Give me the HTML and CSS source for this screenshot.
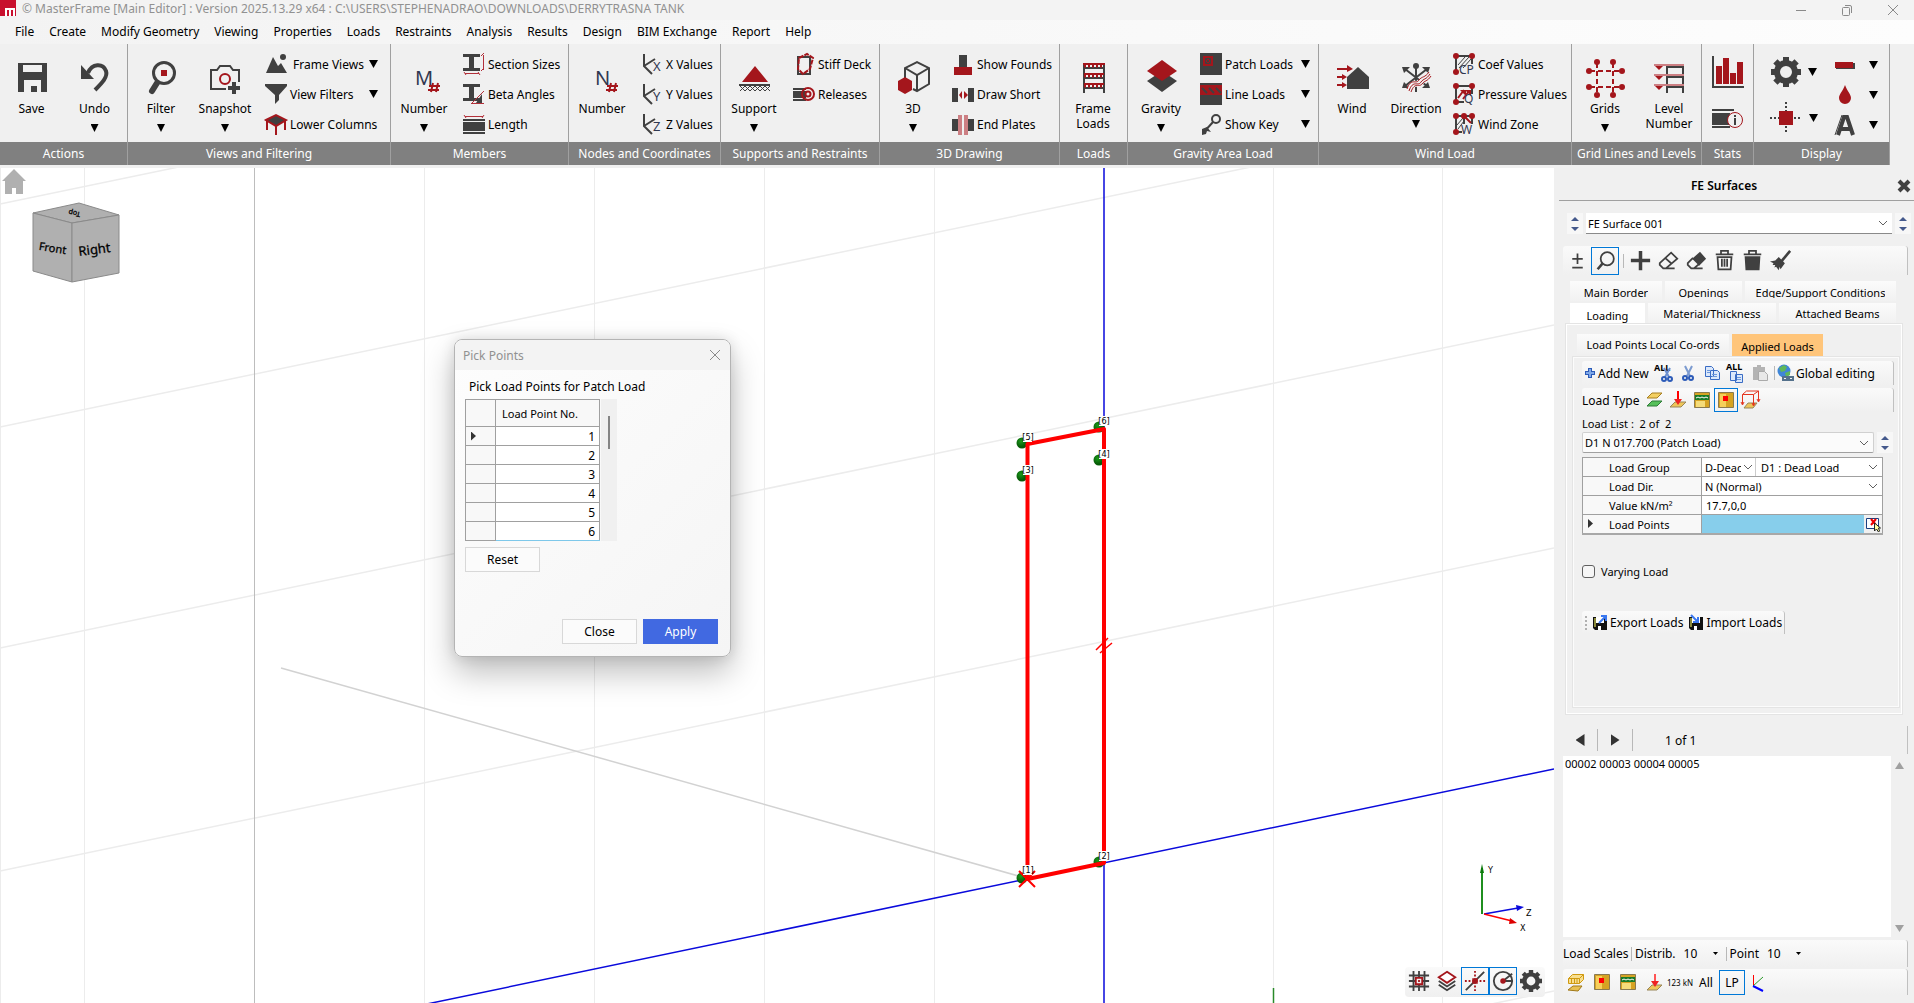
FILE: index.html
```html
<!DOCTYPE html>
<html lang="en">
<head>
<meta charset="utf-8">
<title>MasterFrame [Main Editor]</title>
<link rel="stylesheet" href="styles.css">
</head>
<body>
<header class="titlebar">
  <svg class="logo" width="16" height="16" viewBox="0 0 16 16"><path fill="#c8102e" d="M0 0h16v16H0z"/><path fill="none" stroke="#fff" stroke-width="2" d="M6 16V9h8v7M10 9v7"/></svg>
  <h1>© MasterFrame [Main Editor] : Version 2025.13.29 x64 : C:\USERS\STEPHENADRAO\DOWNLOADS\DERRYTRASNA TANK</h1>
  <div class="window-buttons">
    <button aria-label="Minimize"><svg width="12" height="12" viewBox="0 0 12 12"><path d="M1 6.500h10"/></svg></button>
    <button aria-label="Restore"><svg width="12" height="12" viewBox="0 0 12 12"><rect x="1.500" y="3.500" width="7" height="8" rx="1"/><path d="M4 1.500h5q1.500 0 1.500 1.500v6"/></svg></button>
    <button aria-label="Close window"><svg width="12" height="12" viewBox="0 0 12 12"><path d="M1 1l10 10M11 1L1 11"/></svg></button>
  </div>
</header>
<nav class="menubar">
  <a href="#">File</a><a href="#">Create</a><a href="#">Modify Geometry</a><a href="#">Viewing</a><a href="#">Properties</a><a href="#">Loads</a><a href="#">Restraints</a><a href="#">Analysis</a><a href="#">Results</a><a href="#">Design</a><a href="#">BIM Exchange</a><a href="#">Report</a><a href="#">Help</a>
</nav>

<div class="ribbon">
  <section class="group g-actions">
    <div class="group-body">
      <button class="big"><svg viewBox="0 0 32 36"><path fill="#404040" fill-rule="evenodd" d="M2 3h29v29H2zM7 5v7h19V5zM8 32V20h17v12h-4v-6h-6v6z"/></svg><span>Save</span></button>
      <button class="big"><svg viewBox="0 0 32 36"><path fill="#404040" d="M2 5v14h13z"/><path fill="none" stroke="#404040" stroke-width="4" d="M9 13C13 3 24 3 27 11c2 6-4 12-11 19"/></svg><span>Undo</span><i class="arrow"></i></button>
    </div>
    <h2>Actions</h2>
  </section>
  <section class="group g-views">
    <div class="group-body">
      <button class="big"><svg viewBox="0 0 32 36"><circle cx="19" cy="13" r="10.500" fill="none" stroke="#404040" stroke-width="3"/><path stroke="#404040" stroke-width="6" stroke-linecap="round" d="M12 23l-5 8"/><path fill="#a4161c" d="M16 10h6v6h-6z"/></svg><span>Filter</span><i class="arrow"></i></button>
      <button class="big mid"><svg viewBox="0 0 32 36"><path fill="none" stroke="#404040" stroke-width="2" d="M17 29H2V10h6l3-4h10l3 4h6v12"/><circle cx="16" cy="19" r="5" fill="none" stroke="#a4161c" stroke-width="2"/><path stroke="#404040" stroke-width="4" d="M19 28h12M25 22v12"/></svg><span>Snapshot</span><i class="arrow"></i></button>
      <div class="small-col after-two">
        <button class="small"><svg viewBox="0 0 22 22"><path fill="#404040" d="M1 20L8 4l5 9 3-3 6 10z"/><circle cx="18" cy="4" r="3" fill="#404040"/></svg><span>&nbsp;Frame Views</span><i class="arrow"></i></button>
        <button class="small"><svg viewBox="0 0 22 22"><path fill="#404040" d="M0 1h22v2l-8 9v5l-4 4v-9L0 3z"/></svg><span>View Filters</span><i class="arrow"></i></button>
        <button class="small"><svg viewBox="0 0 22 22"><path fill="none" stroke="#a4161c" stroke-width="2" d="M2 6v11M20 6v11M11 12v10"/><path fill="#404040" stroke="#a4161c" stroke-width="2" d="M1 7l10-5 10 5-10 6z"/></svg><span>Lower Columns</span></button>
      </div>
    </div>
    <h2>Views and Filtering</h2>
  </section>
  <section class="group g-members">
    <div class="group-body">
      <button class="big"><svg viewBox="0 0 32 36"><text x="7" y="25" font-size="20" fill="#303850">M</text><path fill="none" stroke="#a4161c" stroke-width="2" d="M25 23l-2 9M30 23l-2 9M21 26h11M20 30h11"/></svg><span>Number</span><i class="arrow"></i></button>
      <div class="small-col">
        <button class="small"><svg viewBox="0 0 22 22"><path fill="#404040" d="M0 1h17v3h-6v11h6v3H0v-3h6V4H0z"/><path fill="none" stroke="#b2303a" d="M20.500 2v15M18 3l3-3M18 18l3-3M2 20.500h14M1 19l2 3M15 19l2 3"/></svg><span>Section Sizes</span></button>
        <button class="small"><svg viewBox="0 0 22 22"><path fill="#404040" d="M0 1h17v3h-6v11h6v3H0v-3h6V4H0zM13 20l6-9v9z"/><path fill="none" stroke="#b2303a" d="M8 21L21 8M9 20.500h12"/></svg><span>Beta Angles</span></button>
        <button class="small"><svg viewBox="0 0 22 22"><path fill="#404040" d="M0 6h22v2H0zM0 9h22v9H0zM0 19h22v2H0z"/><path stroke="#b2303a" d="M2 3.500h18M1 2l2 3M19 5l2-3"/></svg><span>Length</span></button>
      </div>
    </div>
    <h2>Members</h2>
  </section>
  <section class="group g-nodes">
    <div class="group-body">
      <button class="big"><svg viewBox="0 0 32 36"><text x="9" y="25" font-size="20" fill="#303850">N</text><path fill="none" stroke="#a4161c" stroke-width="2" d="M25 23l-2 9M30 23l-2 9M21 26h11M20 30h11"/></svg><span>Number</span></button>
      <div class="small-col">
        <button class="small"><svg viewBox="0 0 22 22"><path fill="none" stroke="#404040" stroke-width="2" d="M3 1v12l8 8M3 13l11-7"/><text x="12" y="18" font-size="13" fill="#303850">X</text></svg><span>X Values</span></button>
        <button class="small"><svg viewBox="0 0 22 22"><path fill="none" stroke="#404040" stroke-width="2" d="M3 1v12l8 8M3 13l11-7"/><text x="12" y="18" font-size="13" fill="#303850">Y</text></svg><span>Y Values</span></button>
        <button class="small"><svg viewBox="0 0 22 22"><path fill="none" stroke="#404040" stroke-width="2" d="M3 1v12l8 8M3 13l11-7"/><text x="12" y="18" font-size="13" fill="#303850">Z</text></svg><span>Z Values</span></button>
      </div>
    </div>
    <h2>Nodes and Coordinates</h2>
  </section>
  <section class="group g-supports">
    <div class="group-body">
      <button class="big"><svg viewBox="0 0 32 36"><path fill="#a4161c" d="M17 6l13 16H4z"/><path fill="none" stroke="#404040" stroke-width="2" d="M1 25h31"/><path fill="none" stroke="#404040" d="M2 31l5-5 5 5 5-5 5 5 5-5 5 5M2 26l5 5 5-5 5 5 5-5 5 5 5-5"/></svg><span>Support</span><i class="arrow"></i></button>
      <div class="small-col">
        <button class="small"><svg viewBox="0 0 22 22"><path fill="none" stroke="#404040" stroke-width="2" d="M5 4h12v17H5z"/><path fill="none" stroke="#a4161c" stroke-width="2" stroke-dasharray="5 1" d="M6 5l8-4 6 4-3 11-7 5-5-5z"/></svg><span>Stiff Deck</span></button>
        <button class="small"><svg viewBox="0 0 22 22"><path fill="#404040" d="M0 5h13v2H0zM0 8h13v7H0zM0 16h13v2H0z"/><circle cx="15" cy="11" r="6" fill="none" stroke="#a4161c" stroke-width="2"/><circle cx="15" cy="11" r="2.500" fill="none" stroke="#a4161c" stroke-width="2"/></svg><span>Releases</span></button>
      </div>
    </div>
    <h2>Supports and Restraints</h2>
  </section>
  <section class="group g-3d">
    <div class="group-body">
      <button class="big"><svg viewBox="0 0 32 36"><path fill="none" stroke="#404040" stroke-width="2" d="M8 19V8l12-6 12 6v16l-12 7-4-2M8 8l12 7 12-7M20 15v16"/><path fill="#a4161c" d="M8 17l7 4v9l-7 4-7-4v-9z"/></svg><span>3D</span><i class="arrow"></i></button>
      <div class="small-col">
        <button class="small"><svg viewBox="0 0 22 22"><path fill="#404040" d="M7 2h8v12H7z"/><path fill="#a4161c" d="M2 14h18v8H2z"/></svg><span>Show Founds</span></button>
        <button class="small"><svg viewBox="0 0 22 22"><path fill="#404040" d="M0 5h6v14H0zM16 5h6v14h-6z"/><path fill="#a4161c" d="M10 8v8l-3-4zM12 8v8l4-4z"/></svg><span>Draw Short</span></button>
        <button class="small"><svg viewBox="0 0 22 22"><path fill="#404040" d="M0 6h7v12H0zM15 6h7v12h-7z"/><path fill="#cc7f83" d="M6 2h4v20H6zM12 2h4v20h-4z"/></svg><span>End Plates</span></button>
      </div>
    </div>
    <h2>3D Drawing</h2>
  </section>
  <section class="group g-loads">
    <div class="group-body">
      <button class="big"><svg viewBox="0 0 32 36"><path fill="none" stroke="#404040" stroke-width="2" d="M7 3v30M27 3v30M7 8h20M7 18h20M7 28h20"/><path stroke="#a4161c" stroke-width="2" d="M6 4h22M7 14h20M7 24h20"/><path stroke="#a4161c" stroke-width="3" stroke-dasharray="2 2" d="M7 6h20M7 16h20M7 26h20"/></svg><span>Frame<br>Loads</span></button>
    </div>
    <h2>Loads</h2>
  </section>
  <section class="group g-gravity">
    <div class="group-body">
      <button class="big"><svg viewBox="0 0 32 36"><path fill="#404040" d="M17 11l15 10-15 11L2 21z"/><path fill="#a4161c" d="M17 0l15 11-15 10L2 11z"/></svg><span>Gravity</span><i class="arrow"></i></button>
      <div class="small-col">
        <button class="small"><svg viewBox="0 0 22 22"><path fill="#404040" d="M0 0h22v22H0z"/><path fill="#a4161c" d="M3 3h10v10H3z"/><path fill="none" stroke="#404040" d="M5.500 5.500h5v5h-5zM6 6l4 4M10 6l-4 4"/></svg><span>Patch Loads</span><i class="arrow"></i></button>
        <button class="small"><svg viewBox="0 0 22 22"><path fill="#404040" d="M0 0h22v22H0z"/><path fill="#a4161c" d="M0 2h22v10H0z"/><path stroke="#404040" stroke-width="2" d="M2 5l5 5M9 5l5 5M16 5l5 5"/></svg><span>Line Loads</span><i class="arrow"></i></button>
        <button class="small"><svg viewBox="0 0 22 22"><circle cx="16" cy="6" r="4" fill="none" stroke="#404040" stroke-width="2"/><path fill="none" stroke="#404040" stroke-width="2" d="M13 9L3 20"/><path fill="#404040" d="M2 16l5-2 4 5-4-1-1 3-4 1z"/></svg><span>Show Key</span><i class="arrow"></i></button>
      </div>
    </div>
    <h2>Gravity Area Load</h2>
  </section>
  <section class="group g-wind">
    <div class="group-body">
      <button class="big"><svg viewBox="0 0 32 36"><path fill="#404040" d="M11 17l11-10 11 10v12H11z"/><path stroke="#a4161c" stroke-width="2" d="M1 9h12M1 17h7M1 25h7"/><path fill="#a4161c" d="M11 5l6 4-6 3zM6 14l5 3-5 3zM6 22l5 3-5 3z"/></svg><span>Wind</span></button>
      <button class="big mid high"><svg viewBox="0 0 32 36"><path fill="none" stroke="#404040" stroke-width="2" d="M16 4v28M5 9l22 17M27 9L5 26"/><circle cx="16" cy="6" r="3" fill="#404040"/><path fill="#404040" d="M2 7h8l-6 6zM30 7h-8l6 6zM2 28h8l-6-6zM30 28h-8l6-6z"/><path fill="none" stroke="#f0f0f0" stroke-width="6" d="M9 31c4-12 9-4 12-9 3-4 5-2 9-8"/><path fill="none" stroke="#a4161c" d="M7 29c4-12 9-4 12-9 3-4 6-2 10-8M9 31c4-12 9-4 12-9 3-4 5-2 9-8M11 32c4-11 8-4 11-8 3-4 5-2 9-8"/></svg><span>Direction</span><i class="arrow"></i></button>
      <div class="small-col">
        <button class="small"><svg viewBox="0 0 22 22"><path fill="none" stroke="#404040" stroke-width="2" d="M3 3h16M3 3v16M19 3v8"/><path stroke="#404040" d="M5 12l7-8M6 15L16 4M10 15l8-9"/><g fill="#a4161c"><circle cx="3" cy="3" r="3"/><circle cx="19" cy="3" r="3"/><circle cx="3" cy="19" r="3"/></g><text x="6" y="21" font-size="12" fill="#303850">CP</text></svg><span>Coef Values</span></button>
        <button class="small"><svg viewBox="0 0 22 22"><path fill="none" stroke="#404040" stroke-width="2" d="M3 3h16M3 3v16M19 3v8M3 19h8"/><path stroke="#a4161c" stroke-width="2" d="M5 15l6-8M10 16l6-8"/><path fill="#a4161c" d="M7 7h6v6zM12 7h6v6z"/><g fill="#a4161c"><circle cx="3" cy="3" r="3"/><circle cx="19" cy="3" r="3"/><circle cx="3" cy="19" r="3"/></g><text x="11" y="20" font-size="12" fill="#303850">Q</text></svg><span>Pressure Values</span></button>
        <button class="small"><svg viewBox="0 0 22 22"><path fill="none" stroke="#404040" stroke-width="2" d="M3 3h16M3 3v16M19 3v8M3 19h6M11 3v8"/><path stroke="#404040" d="M4 12l6-7M5 16l6-8"/><path stroke="#a4161c" stroke-width="2" d="M12 4l6 6"/><g fill="#a4161c"><circle cx="3" cy="3" r="3"/><circle cx="11" cy="3" r="3"/><circle cx="19" cy="3" r="3"/><circle cx="3" cy="19" r="3"/></g><text x="8" y="21" font-size="12" fill="#303850">W</text></svg><span>Wind Zone</span></button>
      </div>
    </div>
    <h2>Wind Load</h2>
  </section>
  <section class="group g-grids">
    <div class="group-body">
      <button class="big wide-icon"><svg viewBox="0 0 40 40"><path fill="none" stroke="#a4161c" stroke-width="2" stroke-dasharray="5 3" d="M12 5v30M28 5v30M5 13h30M5 29h30"/><g fill="#a4161c"><circle cx="12" cy="4" r="3"/><circle cx="28" cy="4" r="3"/><circle cx="12" cy="37" r="3"/><circle cx="28" cy="37" r="3"/><circle cx="4" cy="13" r="3"/><circle cx="37" cy="13" r="3"/><circle cx="4" cy="29" r="3"/><circle cx="37" cy="29" r="3"/></g></svg><span>Grids</span><i class="arrow"></i></button>
      <button class="big mid"><svg viewBox="0 0 32 36"><path fill="none" stroke="#404040" stroke-width="2" d="M14 33V7h16v26M14 17h16M14 27h16"/><path stroke="#cc7f83" stroke-width="2" d="M1 5h30M1 15h30M1 25h30"/><path fill="#a4161c" d="M2 6h8l-4 4zM2 16h8l-4 4zM2 26h8l-4 4z"/></svg><span>Level<br>Number</span></button>
    </div>
    <h2>Grid Lines and Levels</h2>
  </section>
  <section class="group g-stats">
    <div class="group-body stack">
      <button class="icon-btn" aria-label="Charts"><svg width="32" height="32" viewBox="0 0 32 32"><path fill="none" stroke="#404040" stroke-width="2" d="M1 0v31h31"/><path fill="#a4161c" d="M4 10h6v18H4zM11 2h6v26h-6zM18 17h6v11h-6zM25 6h6v22h-6z"/></svg></button>
      <button class="icon-btn" aria-label="Member info"><svg width="32" height="20" viewBox="0 0 32 20"><path fill="#404040" d="M0 0h22v2H0zM0 4h18v12H0zM0 17h18v2H0z"/><circle cx="23" cy="11" r="7.500" fill="#f0f0f0" stroke="#a4161c"/><path stroke="#404040" stroke-width="2" d="M23 9v7M23 6v2"/></svg></button>
    </div>
    <h2>Stats</h2>
  </section>
  <section class="group g-display">
    <div class="group-body">
      <div class="display-col">
        <button class="icon-btn" aria-label="Settings"><svg width="30" height="30" viewBox="-15 -15 30 30"><g fill="#404040"><path fill-rule="evenodd" d="M0-12a12 12 0 100 24 12 12 0 100-24zM0-6a6 6 0 110 12 6 6 0 110-12z"/><path d="M-3-15h6v5h-6zM-3 10h6v5h-6zM-15-3h5v6h-5zM10-3h5v6h-5z"/><path transform="rotate(45)" d="M-3-15h6v5h-6zM-3 10h6v5h-6zM-15-3h5v6h-5zM10-3h5v6h-5z"/></g></svg><i class="arrow"></i></button>
        <button class="icon-btn" aria-label="Node display"><svg width="32" height="32" viewBox="0 0 32 32"><path stroke="#404040" stroke-width="2" stroke-dasharray="2 2" d="M16 0v32M0 16h32"/><path fill="#a4161c" d="M9 9h14v14H9z"/></svg><i class="arrow"></i></button>
      </div>
      <div class="display-col rows">
        <button class="icon-btn" aria-label="Member display"><svg width="22" height="22" viewBox="0 0 22 22"><path fill="#404040" d="M2 9h19v6H2z"/><path fill="#a4161c" d="M1 8h18v6H1z"/></svg><i class="arrow"></i></button>
        <button class="icon-btn" aria-label="Colour"><svg width="22" height="22" viewBox="0 0 22 22"><path fill="#a4161c" d="M11 1c2 6 6 9 6 13a6 6 0 01-12 0c0-4 4-7 6-13z"/></svg><i class="arrow"></i></button>
        <button class="icon-btn" aria-label="Font"><svg width="22" height="22" viewBox="0 0 22 22"><path fill="none" stroke="#404040" stroke-width="4" d="M4 21l6-18h3l6 18M7 15h9"/><path stroke="#404040" d="M1 21L8 1"/></svg><i class="arrow"></i></button>
      </div>
    </div>
    <h2>Display</h2>
  </section>
</div>

<main class="workspace">
  <div class="viewport">
    <svg class="scene" viewBox="0 168 1554 835" preserveAspectRatio="xMinYMin slice">
      <defs><radialGradient id="ball" cx="40%" cy="35%"><stop offset="0" stop-color="#1b9a1b"/><stop offset="1" stop-color="#075c07"/></radialGradient></defs>
      <g fill="none" stroke="#ececec"><path d="M.5 168v835M84.500 168v835M424.500 168v835M594.500 168v835M764.500 168v835M934.500 168v835M1273.500 168v835M1442.500 168v835"/>
      <path stroke-width="1.500" d="M0 204L1554-118M0 427l1554-323M0 648l1554-323M0 871l1554-323M0 1314l1554-323"/></g>
      <path stroke="#bdbdbd" d="M254.500 168v835"/>
      <path stroke="#d2d2d2" stroke-width="1.500" d="M281 668l741 209"/>
      <path stroke="#0a0adc" stroke-width="1.500" d="M0 1093L1554 769M1104 168v261M1104 862v141"/>
      <path stroke="#2a8a2a" stroke-width="1.500" d="M1273.500 988v15"/>
      <g fill="url(#ball)"><circle cx="1022" cy="443" r="5.500"/><circle cx="1022" cy="476" r="5.500"/><circle cx="1099" cy="427" r="5.500"/><circle cx="1099" cy="460" r="5.500"/><circle cx="1022" cy="878" r="5.500"/><circle cx="1099" cy="862" r="5.500"/></g>
      <path fill="none" stroke="red" stroke-width="4" stroke-linejoin="round" d="M1027.500 879V444l76.500-15v434z"/>
      <path fill="none" stroke="red" stroke-width="2" d="M1019 871l16 16M1035 871l-16 16"/><path fill="none" stroke="red" stroke-width="1.500" d="M1096 650l12-12M1100 653l12-10"/>
      <g fill="#fff"><path d="M1023 432h9v10h-9zM1023 465h9v10h-9zM1099 416h9v10h-9zM1099 449h9v10h-9zM1023 865h9v10h-9zM1099 851h9v10h-9z"/></g>
      <g class="tags" text-anchor="middle"><text x="1028" y="440">[5]</text><text x="1028" y="473">[3]</text><text x="1104" y="424">[6]</text><text x="1104" y="457">[4]</text><text x="1028" y="873">[1]</text><text x="1104" y="859">[2]</text></g>
      <g stroke="#8a8a8a" fill="#b0b0b0" stroke-linejoin="round"><path d="M33 213l46-10 40 12-47 8z"/><path d="M33 213l39 10v59l-39-11z"/><path d="M72 223l47-8v58l-47 9z"/></g>
      <g class="cube-text" text-anchor="middle"><text class="cube-front" transform="translate(52 252) rotate(9)">Front</text><text transform="translate(95 254) rotate(-7)">Right</text><text class="cube-top" transform="translate(75 211) rotate(192)">Top</text></g>
      <path fill="#b0b0b0" d="M14 169l12 12h-3v13H16v-6h-4v6H5v-13H2z"/>
      <g fill="none" stroke-width="1.500"><path stroke="#1f8f1f" stroke-width="2" d="M1482 914v-46"/><path stroke="#0a0adc" d="M1484 914l34-6"/><path stroke="red" d="M1484 914l28 7"/></g>
      <path fill="#0b7a0b" d="M1480 873l2-9 2 9z"/><path fill="#0a0adc" d="M1516 905l8 2-7 4z"/><path fill="#d00" d="M1510 918l7 5-8 1z"/>
      <g class="tags"><text x="1488" y="873">Y</text><text x="1526" y="916">Z</text><text x="1520" y="931">X</text></g>
    </svg>
    <div class="view-tools">
      <button aria-label="Grid snap"><svg viewBox="0 0 24 24"><path fill="none" stroke="#404040" stroke-width="2" d="M6 1v22M12 1v22M18 1v22M1 6h22M1 12h22M1 18h22"/><path fill="#f0f0f0" stroke="#a4161c" stroke-width="2" d="M8.500 8.500h7v7h-7z"/><path fill="#a4161c" d="M11 11h2v2h-2z"/></svg></button>
      <button aria-label="Layers"><svg viewBox="0 0 24 24"><path fill="none" stroke="#404040" stroke-width="2" d="M3 12l9 6 9-6M3 16l9 6 9-6"/><path fill="#fff" stroke="#a4161c" stroke-width="2" d="M12 2l9 6-9 6-9-6z"/></svg></button>
      <button class="on" aria-label="Axis snap"><svg viewBox="0 0 24 24"><path stroke="#404040" stroke-width="2" d="M2 22L22 2"/><path stroke="#a4161c" stroke-width="2" stroke-dasharray="2 2" d="M12 1v22M1 12h22"/><path fill="#a4161c" d="M9 9h6v6H9z"/></svg></button>
      <button class="on" aria-label="Polar snap"><svg viewBox="0 0 24 24"><circle cx="12" cy="12" r="10" fill="none" stroke="#404040" stroke-width="2"/><path stroke="#404040" stroke-width="2" d="M12 12l10-8M12 12h10"/><circle cx="12" cy="12" r="3" fill="#a4161c"/></svg></button>
      <button aria-label="View settings"><svg viewBox="-15 -15 30 30"><g fill="#404040"><path fill-rule="evenodd" d="M0-12a12 12 0 100 24 12 12 0 100-24zM0-6a6 6 0 110 12 6 6 0 110-12z"/><path d="M-3-15h6v5h-6zM-3 10h6v5h-6zM-15-3h5v6h-5zM10-3h5v6h-5z"/><path transform="rotate(45)" d="M-3-15h6v5h-6zM-3 10h6v5h-6zM-15-3h5v6h-5zM10-3h5v6h-5z"/></g></svg></button>
    </div>

    <section class="dialog" role="dialog" aria-labelledby="pick-title">
      <header><h2 id="pick-title">Pick Points</h2><button aria-label="Close dialog"><svg width="12" height="12" viewBox="0 0 12 12"><path stroke="#8a8a8a" d="M1 1l10 10M11 1L1 11"/></svg></button></header>
      <p>Pick Load Points for Patch Load</p>
      <div class="pick-grid">
        <table>
          <thead><tr><th></th><th>Load Point No.</th></tr></thead>
          <tbody>
            <tr><td><i class="current"></i></td><td>1</td></tr>
            <tr><td></td><td>2</td></tr>
            <tr><td></td><td>3</td></tr>
            <tr><td></td><td>4</td></tr>
            <tr><td></td><td>5</td></tr>
            <tr><td></td><td>6</td></tr>
          </tbody>
        </table>
        <div class="scrollbar"><i></i></div>
      </div>
      <button class="plain">Reset</button>
      <footer><button class="plain">Close</button><button class="primary">Apply</button></footer>
    </section>
  </div>

  <aside class="panel">
    <header class="panel-head"><h2>FE Surfaces</h2><button aria-label="Close panel"><svg width="14" height="14" viewBox="0 0 14 14"><path stroke="#404040" stroke-width="4" d="M2 2l10 10M12 2L2 12"/></svg></button></header>
    <div class="surface-row">
      <span class="spin"><i></i><i></i></span>
      <select class="surface" aria-label="Surface"><option>FE Surface 001</option></select>
      <span class="spin"><i></i><i></i></span>
    </div>
    <div class="bar edit-tools">
      <button aria-label="Plus minus"><svg viewBox="0 0 24 24"><path stroke="#404040" stroke-width="2" d="M6 10h12M12 4v12M6 20h12"/></svg></button>
      <button class="on" aria-label="Zoom to"><svg viewBox="0 0 24 24"><circle cx="14" cy="10" r="7.500" fill="none" stroke="#404040" stroke-width="2"/><path stroke="#404040" stroke-width="3" d="M9 15l-6 7"/></svg></button>
      <i class="sep"></i>
      <button aria-label="Add"><svg viewBox="0 0 24 24"><path stroke="#404040" stroke-width="4" d="M1 12h22M12 1v22"/></svg></button>
      <button aria-label="Erase outline"><svg viewBox="0 0 24 24"><path fill="none" stroke="#404040" stroke-width="2" d="M2 15L15 3l7 7-13 11H6l-4-4zM8 9l8 7M9 21h10"/></svg></button>
      <button aria-label="Erase"><svg viewBox="0 0 24 24"><path fill="#404040" d="M7 10l9-8 7 8-8 8z"/><path fill="none" stroke="#404040" stroke-width="2" d="M8 9l-6 6v2l4 4h3l6-5M9 21h10"/></svg></button>
      <button aria-label="Delete"><svg viewBox="0 0 24 24"><path fill="none" stroke="#404040" stroke-width="2" d="M2 5h20M8 5V1h8v4M4 8l1 14h14l1-14zM9 10v9M12 10v9M15 10v9"/></svg></button>
      <button aria-label="Delete all"><svg viewBox="0 0 24 24"><path fill="none" stroke="#404040" stroke-width="2" d="M2 5h20M8 5V1h8v4"/><path fill="#404040" d="M3 7h18l-1 16H4z"/></svg></button>
      <button aria-label="Clean"><svg viewBox="0 0 24 24"><path stroke="#404040" stroke-width="3" d="M23 1L13 13"/><path fill="#404040" d="M0 13l6-1 4-4 7 7-5 7-1-3-1 4-3-4-2 1 1-3-3 0 1-2z"/></svg></button>
    </div>

    <div class="tabs tabs-one">
      <button><span>Main Border</span></button><button><span>Openings</span></button><button><span>Edge/Support Conditions</span></button>
    </div>
    <div class="tabs tabs-two">
      <button class="active">Loading</button><button>Material/Thickness</button><button>Attached Beams</button>
    </div>
    <div class="page">
      <div class="subtabs"><button>Load Points Local Co-ords</button><button class="active">Applied Loads</button></div>
      <div class="subpage">
        <div class="bar load-tools">
          <button class="add"><svg width="10" height="10" viewBox="0 0 10 10"><path stroke="#2c5bb8" stroke-width="4" d="M0 5h10M5 0v10"/><path stroke="#7fa8e8" stroke-width="2" d="M1 5h8M5 1v8"/></svg>Add New</button>
          <button aria-label="Cut all"><svg viewBox="0 0 20 20"><text x="0" y="8" font-size="9" font-weight="700">ALL</text><path stroke="#6b8fd0" stroke-width="2" d="M10 5l5 9M16 5l-5 9"/><g fill="none" stroke="#2c5bb8" stroke-width="2"><circle cx="10" cy="16" r="2"/><circle cx="16" cy="16" r="2"/></g></svg></button>
          <button aria-label="Cut"><svg viewBox="0 0 20 20"><path stroke="#7c9bd0" stroke-width="2" d="M7 3l5 10M14 3L9 13"/><g fill="none" stroke="#2c5bb8" stroke-width="2"><circle cx="7" cy="15" r="2"/><circle cx="13" cy="15" r="2"/></g></svg></button>
          <button aria-label="Copy"><svg viewBox="0 0 20 20"><path fill="#dbe8fb" stroke="#3a6cc4" d="M3.500 3.500h6l2 2v8h-8zM8.500 7.500h7l2 2v7h-9z"/><path stroke="#6c98dc" d="M5 7.500h4M5 9.500h3M10 11.500h5M10 13.500h5"/></svg></button>
          <button aria-label="Copy all"><svg viewBox="0 0 20 20"><text x="0" y="7" font-size="9" font-weight="700">ALL</text><path fill="#dbe8fb" stroke="#3a6cc4" d="M4.500 8.500h6v9h-6zM9.500 11.500h7v8h-7z"/><path stroke="#6c98dc" d="M11 14.500h4M11 16.500h4"/></svg></button>
          <button aria-label="Paste"><svg viewBox="0 0 20 20"><path fill="#b4b4b4" d="M3 4h4V2h4v2h4v13H3z"/><path fill="#e8e8e8" stroke="#aaa" d="M8.500 8.500h6l3 3v6h-9z"/></svg></button>
          <i class="sep"></i>
          <button class="global"><svg width="18" height="18" viewBox="0 0 18 18"><circle cx="7" cy="7" r="6.500" fill="#3f86d8"/><path fill="#5fb85a" d="M2 4l5-3 3 2-2 4-4 1zM8 9l5-2v4l-4 2z"/><path fill="none" stroke="#54718c" stroke-width="2" d="M6 13h4v3H6zM12 13h4v3h-4zM9 14h4"/></svg>Global editing</button>
        </div>
        <div class="bar load-tools">
          <span class="type-label">Load Type</span>
          <button aria-label="Area load"><svg viewBox="0 0 20 20"><path fill="#f3cf62" stroke="#a77f20" d="M3 8l5-5h10l-5 5z"/><path fill="#56c05a" stroke="#2f7c38" d="M3 16l5-5h10l-5 5z"/></svg></button>
          <button aria-label="Point load"><svg viewBox="0 0 20 20"><path fill="#eec65a" stroke="#98865a" d="M2 17l5-5h11l-5 5z"/><path stroke="red" stroke-width="2" d="M10 1v10"/><path fill="#e22" d="M6 9h8l-4 6z"/></svg></button>
          <button aria-label="Line load"><svg viewBox="0 0 20 20"><path fill="#d6a323" stroke="#8a7a50" d="M2.500 2.500h15v15h-15z"/><path fill="#f6dc7a" d="M4 11h9v6H4z"/><path fill="#187a28" d="M3 5h14v5H3z"/><path fill="none" stroke="#fff" d="M4 8l2-1 2 1 2-1 2 1 2-1 2 1"/></svg></button>
          <button class="on" aria-label="Patch load"><svg viewBox="0 0 20 20"><path fill="#d6a323" stroke="#8a7a50" d="M2.500 2.500h15v15h-15z"/><path fill="#f6cf5a" d="M4 4h6v13H4z"/><path fill="red" d="M7 6h5v5H7z"/></svg></button>
          <button aria-label="Global patch load"><svg viewBox="0 0 20 20"><path fill="#eec65a" stroke="#98865a" d="M4 18l4-5h9l-4 5z"/><path fill="none" stroke="#e4341e" d="M2.500 14V4.500L6.500 1h12v10M2.500 4.500h11V15M13.500 4.500l5-3.500M1 12l1.500 3L4 12M12 13l1.500 3 1.500-3M17 9l1.500 3L20 9"/></svg></button>
        </div>
        <label class="list-label" for="load-list">Load List :&nbsp; 2 of&nbsp; 2</label>
        <div class="list-row">
          <select id="load-list"><option>D1 N 017.700 (Patch Load)</option></select>
          <span class="spin"><i></i><i></i></span>
        </div>
        <table class="props">
          <tr><th scope="row">Load Group</th><td><div class="pair"><select aria-label="Load group"><option>D-Dead</option></select><select aria-label="Load case"><option>D1 : Dead Load</option></select></div></td></tr>
          <tr><th scope="row">Load Dir.</th><td><select aria-label="Load direction"><option>N (Normal)</option></select></td></tr>
          <tr><th scope="row">Value kN/m²</th><td><input type="text" aria-label="Value" value="17.7,0,0"></td></tr>
          <tr><th scope="row"><i class="current"></i>Load Points</th><td class="selected"><button aria-label="Pick load points"><svg width="18" height="18" viewBox="0 0 18 18"><path fill="#fff" stroke="#1b3f80" d="M2.500 3.500h12v10h-12z"/><path stroke="#e00" stroke-width="2" d="M7 4l5 6M12 4l-5 6"/><path fill="#ffffa0" stroke="#222" d="M10.500 8v8l2-2 2 3 1-1-1-3h2z"/></svg></button></td></tr>
        </table>
        <label class="check"><input type="checkbox">Varying Load</label>
        <div class="bar io-tools">
          <i class="grip"></i>
          <button><svg width="15" height="15" viewBox="0 0 15 15"><path fill="#111" d="M0 2h14v13H2l-2-2z"/><path fill="#8a8a3a" d="M1 3h2v9H1z"/><path fill="#fff" d="M3 2h8v6H3zM5 11h3v4H5z"/><path fill="none" stroke="#3a78f0" stroke-width="2" d="M6 8l6-6M8 1h5v5"/></svg>Export Loads</button>
          <button><svg width="15" height="15" viewBox="0 0 15 15"><path fill="#111" d="M0 2h14v13H2l-2-2z"/><path fill="#8a8a3a" d="M1 3h2v9H1z"/><path fill="#fff" d="M3 2h8v6H3zM5 11h3v4H5z"/><path fill="none" stroke="#3a78f0" stroke-width="2" d="M2 0l7 7M9 2v5H4"/></svg>Import Loads</button>
        </div>
      </div>
    </div>

    <div class="pager">
      <button aria-label="Previous"><i class="prev"></i></button><i class="sep"></i><button aria-label="Next"><i class="next"></i></button><i class="sep"></i><span>1 of 1</span>
    </div>
    <div class="node-list"><textarea aria-label="Nodes" readonly>00002 00003 00004 00005</textarea><div class="old-scroll"><i class="up"></i><i class="down"></i></div></div>
    <div class="bar scales">
      <span class="s-title">Load Scales</span><i class="sep"></i>
      <label for="distrib">Distrib.</label><select id="distrib"><option>10</option></select><i class="sep"></i>
      <label for="point">Point</label><select id="point"><option>10</option></select>
    </div>
    <div class="bar show-tools">
      <button aria-label="Show area loads"><svg viewBox="0 0 20 20"><path fill="#e8c050" stroke="#a07818" d="M2 18l5-4h9l-4 5z"/><path fill="#f8df90" stroke="#d09a10" d="M2.500 6.500l4-4h11v5l-4 4h-11zM2.500 6.500h11v5M13.500 6.500l4-4M5.500 7v4M8.500 7v4M11 7v4"/></svg></button>
      <button aria-label="Show patch loads"><svg viewBox="0 0 20 20"><path fill="#d6a323" stroke="#8a7a50" d="M2.500 2.500h15v15h-15z"/><path fill="#f6cf5a" d="M4 4h6v13H4z"/><path fill="red" d="M7 6h5v5H7z"/></svg></button>
      <button aria-label="Show line loads"><svg viewBox="0 0 20 20"><path fill="#d6a323" stroke="#8a7a50" d="M2.500 2.500h15v15h-15z"/><path fill="#f6dc7a" d="M4 11h9v6H4z"/><path fill="#187a28" d="M3 5h14v5H3z"/><path fill="none" stroke="#fff" d="M4 8l2-1 2 1 2-1 2 1 2-1 2 1"/></svg></button>
      <button aria-label="Show point loads"><svg viewBox="0 0 20 20"><path fill="#eec65a" stroke="#98865a" d="M3 18l5-5h10l-5 5z"/><path stroke="#f55" stroke-width="2" d="M11 2v9"/><path fill="#e22" d="M7 9h8l-4 6z"/></svg></button>
      <button class="units">123 kN</button>
      <button class="text-btn">All</button>
      <button class="text-btn on">LP</button>
      <button aria-label="Local axes"><svg viewBox="0 0 20 20"><path fill="none" stroke="red" d="M5.500 3v11"/><path stroke="#2a9a2a" d="M5 14L15 5"/><path stroke="#00f" stroke-width="2" d="M5 14l10 5"/></svg></button>
    </div>
  </aside>
</main>
</body>
</html>
```
FILE: styles.css
```css
* { box-sizing: border-box; }

body {
  margin: 0;
  height: 100vh;
  display: flex;
  flex-direction: column;
  background: #f0f0f0;
  color: #000;
  font: 12px/15px "Noto Sans", "Open Sans", sans-serif;
  overflow: hidden;
}

h1, h2, p { margin: 0; font-size: 12px; font-weight: 400; }
i { font-style: normal; }
button, select, input, textarea { font: inherit; color: inherit; margin: 0; padding: 0; border: 0; background: none; border-radius: 0; }
button { display: flex; align-items: center; justify-content: center; white-space: nowrap; }
svg { display: block; flex: none; overflow: visible; }

/* window title and menu */
.titlebar { height: 20px; flex: none; display: flex; align-items: center; background: #f3f3f3; }
.titlebar .logo { align-self: flex-start; margin-right: 6px; }
.titlebar h1 { color: #919191; flex: 1; line-height: 16px; padding-bottom: 2px; white-space: nowrap; }
.window-buttons { display: flex; gap: 34px; padding-right: 15px; }
.window-buttons svg { fill: none; stroke: #8a8a8a; }
.menubar { height: 24px; flex: none; display: flex; align-items: center; gap: 15px; padding: 0 0 2px 15px; background: linear-gradient(90deg, #f3f3f3, #fdfdfd); }
.menubar a { color: #000; text-decoration: none; white-space: nowrap; }

/* ribbon */
.ribbon { display: flex; flex: none; height: 121px; margin-bottom: 3px; }
.group { display: flex; flex-direction: column; flex: none; border-right: 1px solid #a0a0a0; }
.group h2 { height: 23px; line-height: 23px; text-align: center; color: #fff; background: #808080; white-space: nowrap; }
.group-body { flex: 1; display: flex; }
.g-actions { width: 128px; }
.g-views { width: 263px; }
.g-members { width: 178px; }
.g-nodes { width: 152px; }
.g-supports { width: 159px; }
.g-3d { width: 180px; }
.g-loads { width: 68px; }
.g-gravity { width: 191px; }
.g-wind { width: 253px; }
.g-grids { width: 130px; }
.g-stats { width: 52px; }
.g-display { width: 136px; }

.big { width: 66px; flex: none; flex-direction: column; justify-content: flex-start; padding-top: 16px; }
.g-actions .big { width: 63px; }
.big.mid { width: 62px; }
.big > svg { width: 32px; height: 36px; margin-bottom: 5px; }
.big.wide-icon { padding-top: 14px; }
.big.wide-icon > svg { width: 40px; height: 40px; margin-bottom: 3px; }
.arrow { width: 9px; height: 8px; flex: none; background: #000; clip-path: polygon(0 0, 100% 0, 50% 100%); }
.big .arrow { width: 8px; margin-top: 8px; }
.big.high .arrow { margin-top: 4px; }
.small-col { flex: 1; padding: 5px 8px 0 6px; }
.small-col.after-two { padding-left: 9px; }
.small { width: 100%; height: 30px; justify-content: flex-start; gap: 3px; }
.small svg { width: 22px; height: 22px; }
.small .arrow { margin-left: auto; }
.g-views .small .arrow { margin-right: 4px; }
.stack { flex-direction: column; align-items: center; gap: 21px; padding-top: 12px; }
.icon-btn { gap: 8px; }
.display-col { display: flex; flex-direction: column; gap: 15px; padding: 13px 0 0 16px; }
.display-col:first-child .icon-btn { gap: 7px; }
.display-col.rows { gap: 8px; padding: 10px 0 0 16px; }
.display-col.rows .icon-btn { gap: 13px; }

/* drawing area */
.workspace { flex: 1; display: flex; min-height: 0; }
.viewport { position: relative; flex: 1; min-width: 0; overflow: hidden; background: #fff; }
.scene { width: 100%; height: 100%; overflow: hidden; }
.tags { font: 9px "DejaVu Sans Condensed", "DejaVu Sans", sans-serif; }
.cube-text { font-size: 13px; stroke: #000; stroke-width: 0.3px; }
.cube-front { font-size: 11px; }
.cube-top { font-size: 7px; }
.view-tools { position: absolute; right: 9px; bottom: 6px; display: flex; padding: 0 0 2px; background: linear-gradient(#fafafa, #f0f0f0); border-radius: 4px; }
.view-tools button { width: 28px; height: 28px; }
.view-tools svg { width: 22px; height: 22px; }
.on { border: 1px solid #0078d7; }

/* pick points window */
.dialog { position: absolute; left: 454px; top: 171px; width: 277px; height: 318px; display: flex; flex-direction: column; border: 1px solid #b4b4b4; border-radius: 8px; background: linear-gradient(135deg, #fdfdfd, #f5f5f5); box-shadow: 0 16px 32px rgba(0, 0, 0, .25), 0 0 14px rgba(0, 0, 0, .12); }
.dialog header { height: 30px; display: flex; align-items: center; justify-content: space-between; padding: 0 9px 0 8px; background: #f3f3f3; border-radius: 8px 8px 0 0; color: #919191; }
.dialog p { padding: 9px 14px 5px; }
.pick-grid { display: flex; gap: 1px; height: 142px; margin-left: 10px; overflow: hidden; }
.pick-grid table { width: 135px; border-collapse: collapse; table-layout: fixed; background: #fff; border: 1px solid #a0a0a0; border-bottom-color: #7ec8ea; }
.pick-grid th, .pick-grid td { border: 1px solid #a0a0a0; padding: 0 4px 0 6px; font-weight: 400; line-height: 15px; }
.pick-grid tr:last-child td:last-child { border-bottom-color: #7ec8ea; }
.pick-grid th { height: 27px; background: #f8f8f8; text-align: left; font-size: 11px; }
.pick-grid th:first-child { width: 30px; }
.pick-grid td { height: 19px; text-align: right; }
.pick-grid td:first-child { background: #f8f8f8; padding-left: 5px; }
.scrollbar { width: 16px; background: #f0f0f0; padding: 17px 7px 0; }
.scrollbar i { display: block; width: 2px; height: 33px; background: #858585; }
.current { display: block; width: 5px; height: 9px; background: #333; clip-path: polygon(0 0, 100% 50%, 0 100%); }
.plain, .primary { width: 75px; height: 25px; border: 1px solid #d8d8d8; background: #fbfbfb; }
.primary { background: #4169e1; border-color: #4169e1; color: #fff; }
.dialog > .plain { margin: 6px 0 0 10px; }
.dialog footer { display: flex; justify-content: flex-end; gap: 6px; margin: auto 12px 12px 0; }

/* surfaces panel */
.panel { width: 360px; flex: none; display: flex; flex-direction: column; padding: 0 0 8px 9px; font-size: 11px; }
.panel-head { height: 33px; flex: none; display: flex; align-items: center; margin-left: -4px; padding: 3px 3px 0 0; border-bottom: 1px solid #a0a0a0; }
.panel-head h2 { flex: 1; text-align: center; font-size: 12px; font-weight: 600; padding-right: 8px; }
.surface-row { display: flex; gap: 3px; flex: none; height: 21px; margin: 12px 3px 0 4px; }
.spin { width: 16px; flex: none; display: flex; flex-direction: column; align-items: center; justify-content: space-between; padding: 4px 0 3px; background: #f7f7f7; }
.spin i { width: 8px; height: 4px; background: #44598c; clip-path: polygon(50% 0, 100% 100%, 0 100%); }
.spin i + i { clip-path: polygon(0 0, 100% 0, 50% 100%); }
select { appearance: none; }
.surface-row select, .list-row select, .props select { padding: 0 22px 0 2px; border-bottom: 1px solid #8a8a8a; background: #fff url("data:image/svg+xml,%3Csvg xmlns='http://www.w3.org/2000/svg' width='10' height='6'%3E%3Cpath fill='none' stroke='%23606060' d='M1 1l4 4 4-4'/%3E%3C/svg%3E") no-repeat right 4px center; }
.surface-row select { flex: 1; min-width: 0; }

.bar { display: flex; align-items: center; flex: none; background: linear-gradient(#fafafa, #f0f0f0); border-right: 1px solid #c0c0c0; border-radius: 3px 3px 0 0; }
.sep { width: 1px; height: 14px; flex: none; background: #b8b8b8; }
.edit-tools { height: 29px; margin: 12px 6px 0 0; }
.edit-tools button { width: 28px; height: 28px; }
.edit-tools svg { width: 21px; height: 21px; }
.edit-tools .sep { margin: 0 2px 0 4px; }

.tabs { display: flex; gap: 3px; flex: none; margin-left: 7px; margin-right: 18px; }
.tabs button { background: linear-gradient(#fbfbfb, #f1f1f1); }
.tabs-one { margin-top: 6px; height: 20px; }
.tabs-one span { height: 13px; line-height: 16px; overflow: hidden; }
.tabs-one button:nth-child(1) { flex: 92; }
.tabs-one button:nth-child(2) { flex: 77; }
.tabs-one button:nth-child(3) { flex: 151; }
.tabs-two { margin-top: 2px; height: 21px; }
.tabs-two button:nth-child(1) { flex: 75; }
.tabs-two button:nth-child(2) { flex: 128; }
.tabs-two button:nth-child(3) { flex: 117; }
.tabs-two button.active { background: #fff; padding-top: 3px; }
.page { flex: none; margin: 0 12px 0 3px; padding: 9px 2px 6px 6px; border: 1px solid #fff; outline: 1px solid #e4e4e4; }
.subtabs { display: flex; gap: 3px; height: 23px; padding-left: 4px; }
.subtabs button { width: 152px; height: 20px; background: linear-gradient(#fbfbfb, #f1f1f1); }
.subtabs button.active { width: 91px; height: 23px; background: #ffc57a; padding-top: 2px; }
.subpage { min-height: 350px; padding: 3px 4px 0 8px; border: 1px solid #fbfbfb; outline: 1px solid #e4e4e4; display: flex; flex-direction: column; align-items: flex-start; }
.load-tools { align-self: stretch; height: 24px; margin-bottom: 3px; font-size: 12px; }
.load-tools button { width: 24px; height: 24px; }
.load-tools button:not(.add):not(.global) svg, .show-tools svg { width: 20px; height: 20px; }
.load-tools .add { width: 70px; gap: 3px; justify-content: flex-start; padding-left: 3px; }
.load-tools .sep { margin: 0 2px; }
.load-tools .global { width: auto; gap: 1px; }
.type-label { width: 60px; }
.list-label { line-height: 17px; }
.list-row { display: flex; gap: 3px; height: 21px; }
.list-row select { width: 292px; border: 1px solid #d0d0d0; border-bottom-color: #a0a0a0; border-radius: 2px; background-color: #fbfbfb; }
.props { width: 301px; margin-top: 4px; border-collapse: collapse; table-layout: fixed; border: 1px solid #a0a0a0; border-bottom: 2px solid #a8a8a8; }
.props th { width: 119px; font-weight: 400; text-align: left; padding: 0 0 0 26px; background: #f8f8f8; position: relative; border: 1px solid #a0a0a0; }
.props th .current { position: absolute; left: 5px; top: 4px; }
.props td { height: 19px; padding: 0; background: #fff; border: 1px solid #a0a0a0; }
.props select, .props input { display: block; width: 100%; height: 18px; border: 0; }
.props input { padding-left: 4px; }
.props select { padding-left: 3px; }
.pair { display: flex; gap: 2px; }
.pair select:first-child { width: 54px; border-right: 1px solid #ccc; padding-right: 14px; background-position: right 2px center; }
.pair select + select { flex: 1; }
.props .selected { background: #87ceeb; }
.props .selected button { margin-left: auto; background: #f0f0f0; }
.check { display: flex; align-items: center; gap: 6px; height: 20px; margin-top: 26px; }
.check input { appearance: none; width: 13px; height: 13px; border: 1px solid #606060; border-radius: 3px; background: #f6f6f6; }
.io-tools { margin-top: 30px; height: 23px; width: 203px; gap: 6px; font-size: 12px; padding-left: 3px; }
.io-tools button { gap: 2px; }
.grip { width: 2px; height: 14px; background: repeating-linear-gradient(#b0b0b0 0 2px, transparent 2px 4px); }

.pager { display: flex; align-items: center; height: 28px; flex: none; margin: 12px 6px 2px 0; font-size: 12px; border-right: 1px solid #c0c0c0; }
.pager button { width: 34px; height: 28px; }
.pager .sep { height: 22px; }
.pager span { padding-left: 32px; }
.prev, .next { width: 9px; height: 12px; background: #333; clip-path: polygon(100% 0, 0 50%, 100% 100%); }
.next { clip-path: polygon(0 0, 100% 50%, 0 100%); }
.node-list { flex: 1; display: flex; min-height: 60px; margin-right: 6px; }
.node-list textarea { flex: 1; resize: none; background: #fff; padding: 0 2px; outline: 0; }
.old-scroll { width: 17px; display: flex; flex-direction: column; align-items: center; justify-content: space-between; padding: 6px 0 5px; }
.up, .down { width: 9px; height: 7px; background: #a0a0a0; clip-path: polygon(50% 0, 100% 100%, 0 100%); }
.down { clip-path: polygon(0 0, 100% 0, 50% 100%); }
.scales { height: 27px; margin: 3px 6px 2px 0; font-size: 12px; }
.scales .s-title { width: 68px; white-space: nowrap; }
.scales label { padding-left: 3px; white-space: nowrap; }
.scales select { width: 42px; margin-left: 8px; background: url("data:image/svg+xml,%3Csvg xmlns='http://www.w3.org/2000/svg' width='5' height='3'%3E%3Cpath d='M0 0h5L2.500 3z'/%3E%3C/svg%3E") no-repeat right 8px center; }
.show-tools { height: 26px; margin-right: 6px; font-size: 12px; }
.show-tools button { width: 26px; height: 25px; }
.show-tools .units { width: 26px; font-size: 8px; }
```
